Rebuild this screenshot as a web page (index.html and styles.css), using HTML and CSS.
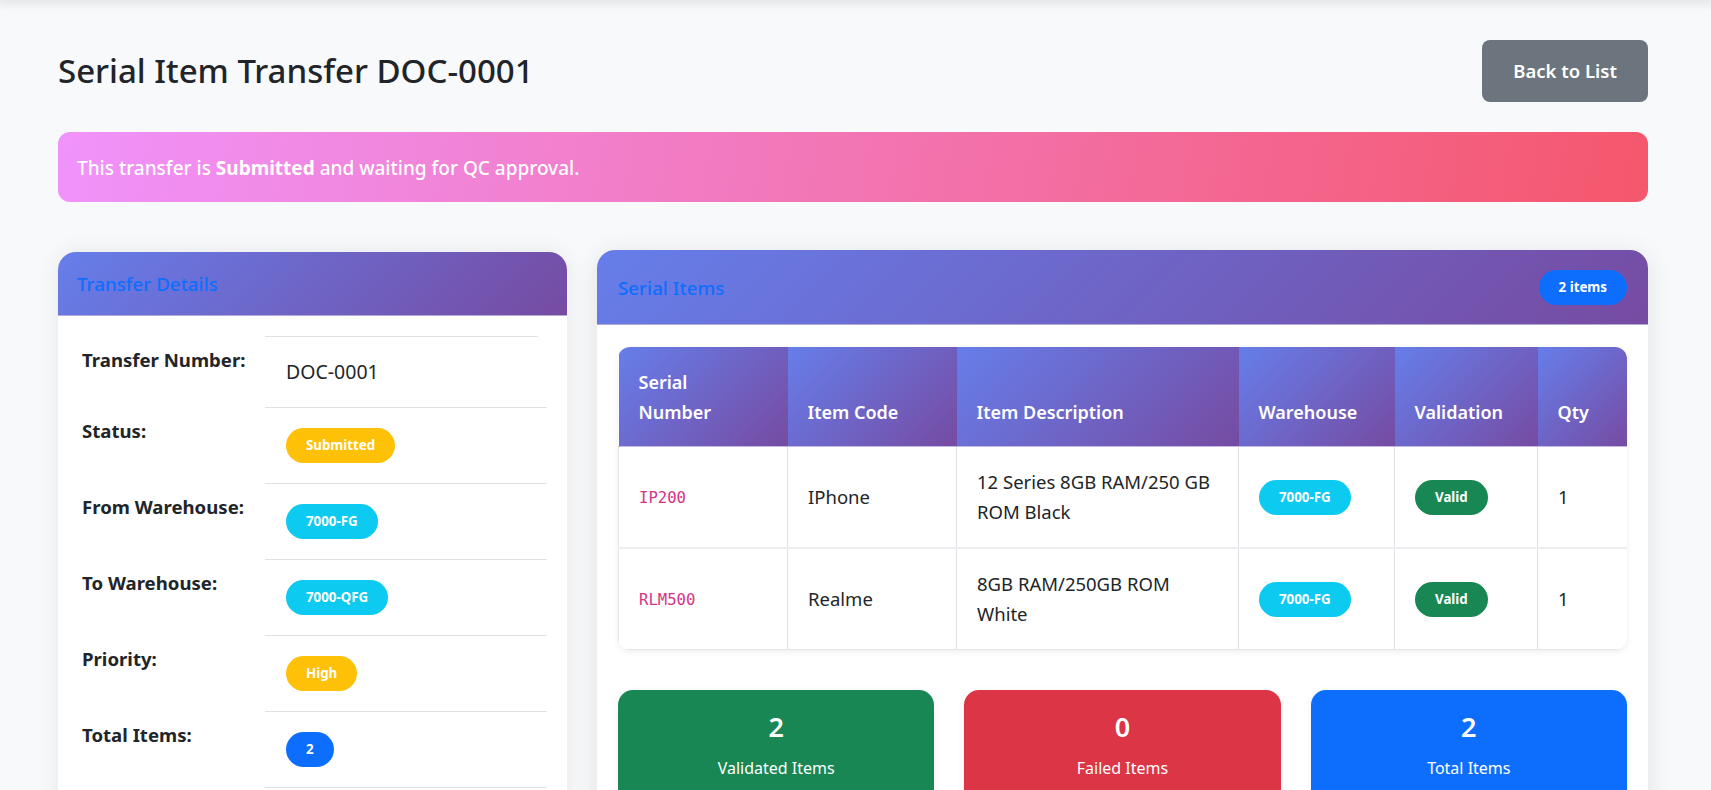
FILE: index.html
```html
<!DOCTYPE html>
<html lang="en">
<head>
<meta charset="utf-8">
<title>Serial Item Transfer DOC-0001</title>
<link rel="stylesheet" href="styles.css">
</head>
<body>
<div class="topshade"></div>
<main class="page">
  <header class="page-head">
    <h1 class="title">Serial Item Transfer DOC-0001</h1>
    <a class="btn-back" href="#">Back to List</a>
  </header>

  <div class="alert">This transfer is&nbsp;<strong>Submitted</strong>&nbsp;and waiting for QC approval.</div>

  <div class="cards-row">
    <section class="card card-left">
      <div class="card-head card-head-left">
        <h5 class="card-title">Transfer Details</h5>
      </div>
      <div class="card-body-left">
        <div class="dtop"></div>
        <div class="drow drow-first">
          <div class="dlabel">Transfer Number:</div>
          <div class="dval">DOC-0001</div>
        </div>
        <div class="drow">
          <div class="dlabel">Status:</div>
          <div class="dval"><span class="badge bg-warning">Submitted</span></div>
        </div>
        <div class="drow">
          <div class="dlabel">From Warehouse:</div>
          <div class="dval"><span class="badge bg-info">7000-FG</span></div>
        </div>
        <div class="drow">
          <div class="dlabel">To Warehouse:</div>
          <div class="dval"><span class="badge bg-info">7000-QFG</span></div>
        </div>
        <div class="drow">
          <div class="dlabel">Priority:</div>
          <div class="dval"><span class="badge bg-warning">High</span></div>
        </div>
        <div class="drow">
          <div class="dlabel">Total Items:</div>
          <div class="dval"><span class="badge bg-primary">2</span></div>
        </div>
      </div>
    </section>

    <section class="card card-right">
      <div class="card-head card-head-right">
        <h5 class="card-title">Serial Items</h5>
        <span class="badge bg-primary">2 items</span>
      </div>
      <div class="card-body-right">
        <div class="table-wrap">
          <table class="items">
            <colgroup>
              <col class="c1"><col class="c2"><col class="c3"><col class="c4"><col class="c5"><col class="c6">
            </colgroup>
            <thead>
              <tr>
                <th class="th-serial">Serial Number</th>
                <th>Item Code</th>
                <th>Item Description</th>
                <th>Warehouse</th>
                <th>Validation</th>
                <th>Qty</th>
              </tr>
            </thead>
            <tbody>
              <tr>
                <td><code>IP200</code></td>
                <td>IPhone</td>
                <td>12 Series 8GB RAM/250 GB ROM Black</td>
                <td><span class="badge bg-info">7000-FG</span></td>
                <td><span class="badge bg-success">Valid</span></td>
                <td>1</td>
              </tr>
              <tr>
                <td><code>RLM500</code></td>
                <td>Realme</td>
                <td>8GB RAM/250GB ROM White</td>
                <td><span class="badge bg-info">7000-FG</span></td>
                <td><span class="badge bg-success">Valid</span></td>
                <td>1</td>
              </tr>
            </tbody>
          </table>
        </div>

        <div class="stats">
          <div class="stat stat-green">
            <div class="stat-num">2</div>
            <div class="stat-label">Validated Items</div>
          </div>
          <div class="stat stat-red">
            <div class="stat-num">0</div>
            <div class="stat-label">Failed Items</div>
          </div>
          <div class="stat stat-blue">
            <div class="stat-num">2</div>
            <div class="stat-label">Total Items</div>
          </div>
        </div>
      </div>
    </section>
  </div>
</main>
</body>
</html>
```

FILE: styles.css
```css
* { box-sizing: border-box; }

html, body {
  margin: 0;
  padding: 0;
}

body {
  background: #f8f9fa;
  font-family: "Noto Sans", "Open Sans", sans-serif;
  color: #212529;
  font-size: 18px;
  line-height: 1.5;
}

.topshade {
  height: 0;
  box-shadow: 0 0 10px 3px rgba(0, 0, 0, 0.13);
}

.page {
  padding: 40px 63px 40px 58px;
}

.page-head {
  display: flex;
  justify-content: space-between;
  align-items: center;
  margin-bottom: 30px;
}

.title {
  margin: 0;
  font-size: 33px;
  font-weight: 500;
  line-height: 1.2;
  color: #212529;
}

.btn-back {
  display: inline-block;
  background: #6c757d;
  color: #fff;
  text-decoration: none;
  font-size: 18.5px;
  font-weight: 600;
  line-height: 26px;
  padding: 18px 31px;
  border-radius: 8px;
}

.alert {
  display: flex;
  align-items: center;
  height: 70px;
  padding: 3px 19px 0;
  border-radius: 12px;
  background: linear-gradient(100deg, #f093fb 0%, #f5576c 100%);
  color: #fff;
  font-size: 19px;
  font-weight: 500;
  margin-bottom: 48px;
}

.alert strong { font-weight: 700; }

.cards-row {
  display: flex;
  align-items: flex-start;
  gap: 30px;
}

.card {
  background: #fff;
  border-radius: 18px;
  box-shadow: 0 0 22px rgba(0, 0, 0, 0.08);
  overflow: hidden;
}

.card-left {
  width: 509px;
  flex: none;
  margin-top: 2px;
}

.card-right {
  flex: 1;
  box-shadow: 0 4px 26px rgba(0, 0, 0, 0.1);
}

.card-head {
  background: linear-gradient(135deg, #667eea 0%, #764ba2 100%);
  border-bottom: 1px solid #b4a9d8;
}

.card-head-left {
  padding: 20px 19px 19px;
}

.card-head-right {
  display: flex;
  justify-content: space-between;
  align-items: center;
  padding: 20px 21px 19px;
}

.card-title {
  margin: 0;
  font-size: 18.8px;
  font-weight: 500;
  line-height: 24px;
  color: #0d6efd;
}

.card-body-left {
  padding: 20px 20px 40px;
}

.dtop {
  height: 1px;
  background: #dee2e6;
  margin: 0 9px 0 187px;
}

.drow {
  display: grid;
  grid-template-columns: 187px 1fr;
}

.dlabel {
  padding: 10px 0 0 4px;
  font-weight: 700;
  font-size: 18.6px;
  line-height: 26px;
}

.dval {
  display: flex;
  align-items: center;
  height: 76px;
  padding-left: 21px;
  border-bottom: 1px solid #dee2e6;
  font-size: 19.5px;
}

.drow-first .dval {
  height: 71px;
}

.badge {
  display: inline-block;
  padding: 0 20px;
  line-height: 35px;
  height: 35px;
  border-radius: 50rem;
  color: #fff;
  font-size: 13.3px;
  font-weight: 700;
  white-space: nowrap;
}

.bg-warning { background: #ffc107; }
.bg-info { background: #0dcaf0; }
.bg-primary { background: #0d6efd; }
.bg-success { background: #198754; }

.card-body-right {
  padding: 22px 21px 40px;
}

.table-wrap {
  border-radius: 12px;
  overflow: hidden;
  box-shadow: 0 2px 6px rgba(0, 0, 0, 0.07);
  margin-bottom: 40px;
}

.items {
  width: 100%;
  border-collapse: collapse;
  table-layout: fixed;
}

.c1 { width: 169px; }
.c2 { width: 169px; }
.c3 { width: 282px; }
.c4 { width: 156px; }
.c5 { width: 143px; }
.c6 { width: 90px; }

.items th {
  background: linear-gradient(135deg, #667eea 0%, #764ba2 100%);
  color: #fff;
  font-size: 18px;
  font-weight: 600;
  line-height: 30px;
  text-align: left;
  vertical-align: bottom;
  padding: 20px 20px 19px;
  border-bottom: 1px solid #c3b9e3;
}

.items th.th-serial {
  padding-right: 50px;
}

.items td {
  padding: 20px;
  font-size: 18.5px;
  line-height: 30px;
  vertical-align: middle;
  border-right: 1px solid #dee2e6;
  border-bottom: 2px solid #eceef1;
  color: #212529;
}

.items tbody tr:last-child td {
  border-bottom: 1px solid #e4e6ea;
}

.items td:first-child {
  border-left: 1px solid #e4e6ea;
}

.items td:last-child {
  border-right: none;
}

.items code {
  font-family: "DejaVu Sans Mono", "Liberation Mono", monospace;
  font-size: 15.6px;
  color: #d63384;
}

.stats {
  display: grid;
  grid-template-columns: repeat(3, 1fr);
  gap: 30px;
}

.stat {
  border-radius: 15px;
  color: #fff;
  text-align: center;
  padding: 20px 20px 30px;
  box-shadow: 0 2px 10px rgba(0, 0, 0, 0.06);
}

.stat-green { background: #198754; }
.stat-red { background: #dc3545; }
.stat-blue { background: #0d6efd; }

.stat-num {
  font-size: 27px;
  font-weight: 600;
  line-height: 34px;
  margin-bottom: 12px;
}

.stat-label {
  font-size: 16px;
  line-height: 24px;
}
```
